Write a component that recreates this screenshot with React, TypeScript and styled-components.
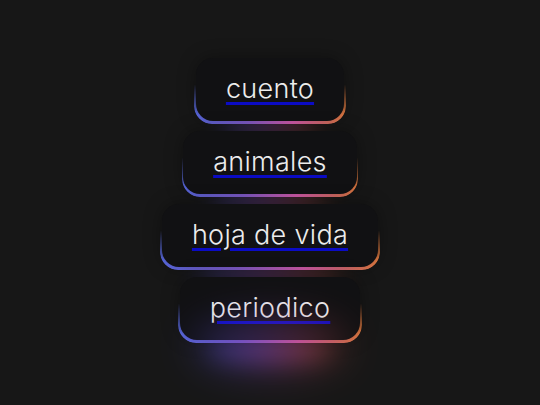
import styled, { createGlobalStyle } from "styled-components";

const GlobalStyle = createGlobalStyle`
  html, body {
    margin: 0;
    padding: 0;
    background: #171717;
    height: 100%;
  }
  #root {
    min-height: 100%;
  }
`;

const Page = styled.main`
  width: 540px;
  height: 405px;
  overflow: hidden;
  background: #171717;
  display: flex;
  flex-direction: column;
  align-items: center;
  gap: 10px;
  padding-top: 58px;
  box-sizing: border-box;
  font-family: Inter, "Liberation Sans", sans-serif;
`;

const GlowButton = styled.a`
  position: relative;
  isolation: isolate;
  display: block;
  text-decoration: none;
  cursor: pointer;

  /* gradient rim, visible only under the lower edge */
  &::before {
    content: "";
    position: absolute;
    inset: 0 -1.5px -2.5px -1.5px;
    z-index: 0;
    border-radius: 18px;
    background: linear-gradient(90deg, #5e70ee 0%, #9066e2 35%, #ec66c0 65%, #ea8040 100%);
    -webkit-mask-image: linear-gradient(to bottom, transparent 40%, #000 85%);
    mask-image: linear-gradient(to bottom, transparent 40%, #000 85%);
  }

  /* soft glow below */
  &::after {
    content: "";
    position: absolute;
    left: 16%;
    right: 16%;
    top: 92%;
    height: 26px;
    z-index: -1;
    border-radius: 50%;
    background: linear-gradient(90deg, #4a55d8 0%, #9a4fc0 45%, #c44f6e 75%, #b8582c 100%);
    filter: blur(12px);
    opacity: 0.4;
  }
`;

const Face = styled.span`
  position: relative;
  z-index: 1;
  display: flex;
  align-items: center;
  justify-content: center;
  height: 63px;
  padding: 0 30px 2px;
  box-sizing: border-box;
  border-radius: 17px;
  background: #111113;
  box-shadow: 0 0 18px rgba(0, 0, 0, 0.35);
  color: #ececec;
  font-size: 27px;
  font-weight: 300;
  letter-spacing: 0.3px;
  line-height: 1;
  text-decoration: underline;
  text-decoration-color: #0b0bc4;
  text-decoration-thickness: 3px;
  text-underline-offset: 4px;
`;

const BottomGlow = styled.div`
  width: 150px;
  height: 50px;
  margin-top: -30px;
  border-radius: 50%;
  background: linear-gradient(90deg, #3f48c8 0%, #7d45b5 45%, #b5466a 75%, #a04a2a 100%);
  filter: blur(20px);
  opacity: 0.4;
`;

const words = ["cuento", "animales", "hoja de vida", "periodico"];

export default function App() {
  return (
    <>
      <GlobalStyle />
      <Page>
        {words.map((word) => (
          <GlowButton key={word} href="#">
            <Face>{word}</Face>
          </GlowButton>
        ))}
        <BottomGlow />
      </Page>
    </>
  );
}
